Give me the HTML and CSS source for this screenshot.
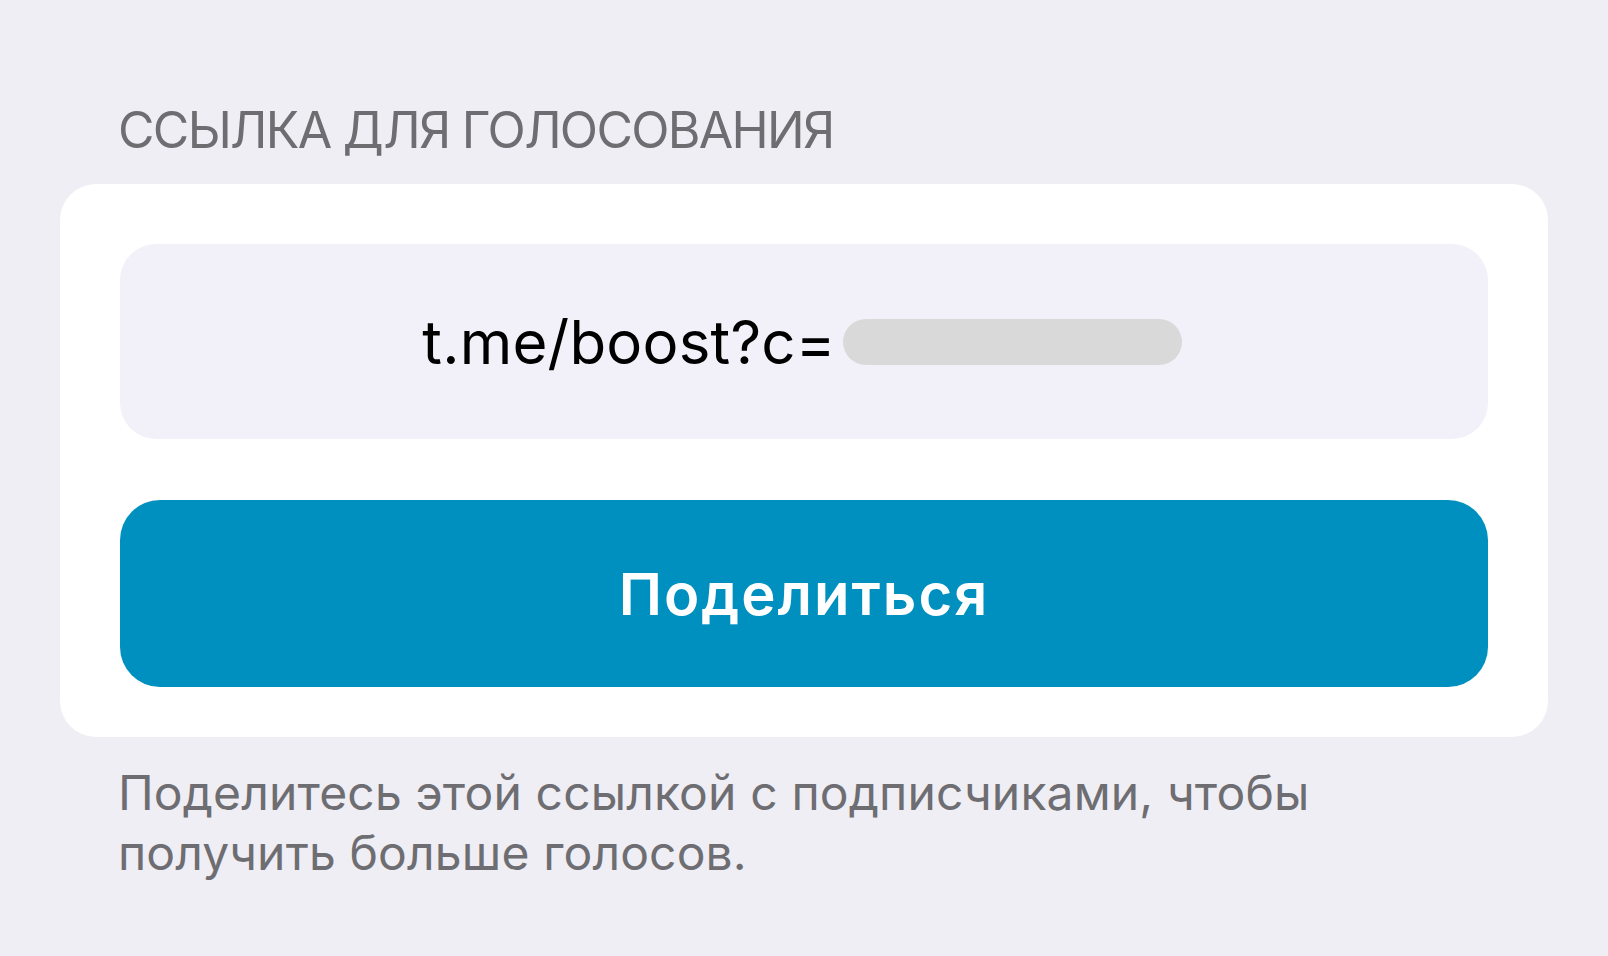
FILE: index.html
```html
<!DOCTYPE html>
<html lang="ru">
<head>
<meta charset="utf-8">
<title>Ссылка для голосования</title>
<link rel="stylesheet" href="styles.css">
</head>
<body>
<main class="page">
  <h2 class="section-header">ССЫЛКА ДЛЯ ГОЛОСОВАНИЯ</h2>
  <section class="card">
    <div class="link-field">
      <span class="link-text">t.me/boost?c=</span>
      <span class="link-mask"></span>
    </div>
    <button class="share-btn" type="button">Поделиться</button>
  </section>
  <p class="section-footer">Поделитесь этой ссылкой с подписчиками, чтобы<br>получить больше голосов.</p>
</main>
</body>
</html>
```

FILE: styles.css
```css
html, body {
  margin: 0;
  padding: 0;
}

body {
  background: #efeef4;
  font-family: Inter, "Noto Sans", "Liberation Sans", sans-serif;
  width: 1608px;
  height: 956px;
  overflow: hidden;
}

.page {
  display: flex;
  flex-direction: column;
  padding-top: 100px;
}

.section-header {
  margin: 0 0 24px 118px;
  font-size: 50px;
  line-height: 60px;
  font-weight: 400;
  color: #6d6d72;
  letter-spacing: -1.7px;
}

.card {
  margin: 0 60px;
  background: #ffffff;
  border-radius: 36px;
  padding: 60px 60px 50px;
  display: flex;
  flex-direction: column;
  gap: 61px;
}

.link-field {
  height: 195px;
  background: #f2f1f9;
  border-radius: 36px;
  display: flex;
  align-items: center;
  justify-content: center;
  gap: 7px;
  padding-right: 4px;
}

.link-text {
  font-size: 60px;
  line-height: 60px;
  color: #000000;
  letter-spacing: 0.2px;
}

.link-mask {
  width: 339px;
  height: 46px;
  border-radius: 23px;
  background: #d9d9d9;
}

.share-btn {
  height: 187px;
  border: none;
  border-radius: 40px;
  background: #0090bf;
  color: #ffffff;
  font-family: inherit;
  font-size: 58px;
  font-weight: 600;
  letter-spacing: 2px;
  padding: 0;
  cursor: pointer;
}

.section-footer {
  margin: 26px 0 0 118px;
  font-size: 48px;
  line-height: 60px;
  color: #6d6d72;
  letter-spacing: 0.15px;
}
```
